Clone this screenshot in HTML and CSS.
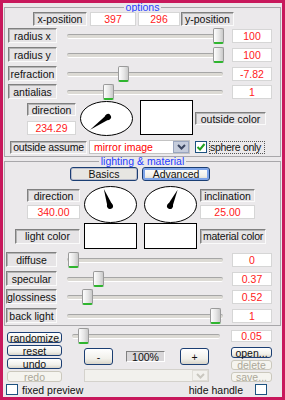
FILE: index.html
```html
<!DOCTYPE html>
<html lang="en">
<head>
    <meta charset="UTF-8">
    <meta name="viewport" content="width=device-width, initial-scale=1.0">
    <title>Sphere Options</title>
    <link rel="stylesheet" href="styles.css">
</head>
<body>
<div class="frame">
    <fieldset class="group options">
        <legend>options</legend>

        <div class="pos-row">
            <span class="tag xpos">x-position</span>
            <span class="num xval">397</span>
            <span class="num yval">296</span>
            <span class="tag ypos">y-position</span>
        </div>

        <div class="slider-row first">
            <span class="tag">radius x</span>
            <div class="track"><span class="thumb" style="left: 146px"></span></div>
            <span class="num">100</span>
        </div>
        <div class="slider-row">
            <span class="tag">radius y</span>
            <div class="track"><span class="thumb" style="left: 146px"></span></div>
            <span class="num">100</span>
        </div>
        <div class="slider-row">
            <span class="tag">refraction</span>
            <div class="track"><span class="thumb" style="left: 51px"></span></div>
            <span class="num">-7.82</span>
        </div>
        <div class="slider-row tight">
            <span class="tag">antialias</span>
            <div class="track"><span class="thumb" style="left: 36px"></span></div>
            <span class="num">1</span>
        </div>

        <div class="dir-row">
            <div class="dir-col">
                <span class="tag">direction</span>
                <span class="num">234.29</span>
            </div>
            <svg class="dial" width="53" height="35" viewBox="0 0 53 35">
                <ellipse cx="26.5" cy="17.5" rx="26" ry="17" fill="#fff" stroke="#000"/>
                <g transform="translate(28 16) rotate(234.29)">
                    <polygon points="0,-22 -2.6,0 2.6,0"/>
                    <circle r="3"/>
                </g>
            </svg>
            <span class="swatch"></span>
            <span class="tag out-color">outside color</span>
        </div>

        <div class="assume-row">
            <span class="tag assume">outside assume</span>
            <div class="combo">
                <span class="combo-text">mirror image</span>
                <span class="combo-btn">
                    <svg width="9" height="6" viewBox="0 0 9 6"><path d="M1 1 L4.5 4.5 L8 1" fill="none" stroke="#3b4660" stroke-width="2"/></svg>
                </span>
            </div>
            <span class="check">
                <svg width="10" height="10" viewBox="0 0 10 10"><path d="M1.5 5 L4 7.5 L8.5 2" fill="none" stroke="#21a121" stroke-width="2"/></svg>
            </span>
            <span class="check-label">sphere only</span>
        </div>
    </fieldset>

    <fieldset class="group lighting">
        <legend>lighting &amp; material</legend>

        <div class="tab-row">
            <span class="btn tab pressed">Basics</span>
            <span class="btn tab hot">Advanced</span>
        </div>

        <div class="light-dir">
            <div class="dir-col wide">
                <span class="tag">direction</span>
                <span class="num">340.00</span>
            </div>
            <svg class="dial" width="53" height="37" viewBox="0 0 53 37">
                <ellipse cx="26.5" cy="18.5" rx="26" ry="18" fill="#fff" stroke="#000"/>
                <g transform="translate(26 20) rotate(340)">
                    <polygon points="0,-18 -2.6,0 2.6,0"/>
                    <circle r="3"/>
                </g>
            </svg>
            <svg class="dial second" width="53" height="37" viewBox="0 0 53 37">
                <ellipse cx="26.5" cy="18.5" rx="26" ry="18" fill="#fff" stroke="#000"/>
                <g transform="translate(26 20) rotate(25)">
                    <polygon points="0,-18 -2.6,0 2.6,0"/>
                    <circle r="3"/>
                </g>
            </svg>
            <div class="dir-col right">
                <span class="tag">inclination</span>
                <span class="num">25.00</span>
            </div>
        </div>

        <div class="color-row">
            <span class="tag light-tag">light color</span>
            <span class="swatch small"></span>
            <span class="swatch small second"></span>
            <span class="tag mat-tag">material color</span>
        </div>

        <div class="slider-row lit gap3">
            <span class="tag">diffuse</span>
            <div class="track"><span class="thumb" style="left: 1px"></span></div>
            <span class="num">0</span>
        </div>
        <div class="slider-row lit">
            <span class="tag">specular</span>
            <div class="track"><span class="thumb" style="left: 26px"></span></div>
            <span class="num">0.37</span>
        </div>
        <div class="slider-row lit gap3">
            <span class="tag">glossiness</span>
            <div class="track"><span class="thumb" style="left: 15px"></span></div>
            <span class="num">0.52</span>
        </div>
        <div class="slider-row lit">
            <span class="tag">back light</span>
            <div class="track"><span class="thumb" style="left: 143px"></span></div>
            <span class="num">1</span>
        </div>
    </fieldset>

    <div class="bottom">
        <div class="left-col">
            <span class="btn">randomize</span>
            <span class="btn">reset</span>
            <span class="btn">undo</span>
            <span class="btn off">redo</span>
        </div>
        <div class="mid-col">
            <div class="track rnd"><span class="thumb" style="left: 6px"></span></div>
            <div class="zoom-row">
                <span class="btn zoom">-</span>
                <span class="pct">100%</span>
                <span class="btn zoom plus">+</span>
            </div>
            <div class="combo off">
                <span class="combo-text"></span>
                <span class="combo-btn">
                    <svg width="9" height="6" viewBox="0 0 9 6"><path d="M1 1 L4.5 4.5 L8 1" fill="none" stroke="#c9c7bf" stroke-width="2"/></svg>
                </span>
            </div>
        </div>
        <div class="right-col">
            <span class="num rnd-val">0.05</span>
            <span class="btn open">open...</span>
            <span class="btn off">delete</span>
            <span class="btn off">save...</span>
        </div>
    </div>

    <div class="footer">
        <span class="check"></span>
        <span class="foot-text">fixed preview</span>
        <span class="foot-text push">hide handle</span>
        <span class="check last"></span>
    </div>
</div>
</body>
</html>
```

FILE: styles.css
```css
* {
    box-sizing: border-box;
}
body {
    margin: 0;
    font-family: "Liberation Sans", Arial, sans-serif;
    font-size: 10.5px;
    color: #111;
}
.frame {
    width: 285px;
    height: 400px;
    border: 3px solid #c8185c;
    background: #ebe9eb;
    padding: 0 1px;
    overflow: hidden;
}

/* group boxes */
.group {
    margin: 0;
    padding: 0 0 2px;
    border: 1px solid #a8a7aa;
    min-width: 0;
}
.group legend {
    margin: 0 auto;
    padding: 0 2px;
    line-height: 9px;
    color: #1f3cff;
}

/* label boxes and value boxes */
.tag {
    display: flex;
    align-items: center;
    justify-content: center;
    height: 15px;
    border: 1px solid;
    border-color: #808080 #fafafa #fafafa #808080;
    box-shadow: inset 1px 1px 0 #b4b4b4;
    background: #e6e4e6;
    white-space: nowrap;
}
.num {
    display: flex;
    align-items: center;
    justify-content: center;
    height: 14px;
    background: #fff;
    border: 1px solid #d6d6d6;
    color: #ff1a1a;
}

/* options */
.pos-row {
    display: flex;
    height: 14px;
    margin-left: 28px;
}
.pos-row .tag {
    height: 14px;
}
.xpos {
    width: 54px;
}
.xval {
    width: 46px;
    margin-left: 3px;
}
.yval {
    width: 42px;
    margin-left: 2px;
}
.ypos {
    width: 53px;
    margin-left: 1px;
}

.slider-row {
    display: flex;
    align-items: center;
    height: 15px;
    margin-top: 4px;
    margin-left: 3px;
}
.slider-row.first {
    margin-top: 2px;
}
.slider-row.tight,
.slider-row.gap3 {
    margin-top: 3px;
}
.slider-row .tag {
    width: 49px;
}
.slider-row .track {
    margin-left: 10px;
}
.slider-row .num {
    width: 40px;
    margin-left: 9px;
}
.slider-row.lit {
    margin-left: 1px;
}
.slider-row.lit .tag {
    width: 51px;
}

.track {
    position: relative;
    width: 156px;
    height: 15px;
}
.track::before {
    content: "";
    position: absolute;
    left: 0;
    right: 0;
    top: 6px;
    height: 3px;
    border-radius: 2px;
    background: #dcdad4;
    border-top: 1px solid #a6a6a6;
    border-bottom: 1px solid #fff;
}
.thumb {
    position: absolute;
    top: 0;
    width: 11px;
    height: 16px;
    border: 1px solid #9a9a9a;
    border-bottom: 2px solid #2fb52f;
    border-radius: 2px;
    background: linear-gradient(to right, #fdfdfd, #e6e6e6 55%, #c9c9c9);
}

.dir-row {
    display: flex;
    align-items: flex-start;
    height: 37px;
    margin-top: 1px;
    margin-left: 22px;
}
.dir-col {
    display: flex;
    flex-direction: column;
    width: 49px;
}
.dir-col .tag {
    height: 13px;
    margin-top: 3px;
}
.dir-col .num {
    margin-top: 5px;
}
.dial {
    display: block;
    margin-left: 4px;
    margin-top: 1px;
}
.swatch {
    width: 53px;
    height: 35px;
    margin-left: 7px;
    background: #fff;
    border: 1px solid #000;
}
.out-color {
    width: 71px;
    height: 13px;
    margin-left: 2px;
    margin-top: 12px;
}

.assume-row {
    display: flex;
    align-items: center;
    height: 14px;
    margin-top: 3px;
    margin-left: 5px;
}
.assume {
    width: 77px;
    height: 13px;
    letter-spacing: -0.2px;
}
.combo {
    display: flex;
    width: 101px;
    height: 14px;
    margin-left: 2px;
    border: 1px solid #c3c3c3;
    background: #fff;
}
.combo-text {
    flex: 1;
    padding-left: 4px;
    line-height: 12px;
    color: #f00;
}
.combo-btn {
    display: flex;
    align-items: center;
    justify-content: center;
    width: 16px;
    background: #c6cddc;
    border: 1px solid #9aa6bf;
}
.check {
    display: flex;
    align-items: center;
    justify-content: center;
    width: 12px;
    height: 12px;
    margin-left: 5px;
    border: 1px solid #1c5180;
    background: #fff;
}
.check-label {
    width: 56px;
    height: 13px;
    margin-left: 2px;
    border: 1px dotted #555;
    line-height: 11px;
    letter-spacing: -0.3px;
    white-space: nowrap;
}

/* lighting & material */
.tab-row {
    display: flex;
    margin-top: 1px;
    margin-left: 65px;
}
.btn {
    display: flex;
    align-items: center;
    justify-content: center;
    border: 1px solid #1b3e73;
    border-radius: 3px;
    background: linear-gradient(#ffffff, #f1f0ea 65%, #d9d5c9);
    white-space: nowrap;
}
.btn.off {
    border-color: #cbc8bd;
    color: #aca899;
    background: #f5f4ef;
}
.tab {
    width: 68px;
    height: 14px;
}
.tab.pressed {
    background: #e7e6e2;
    box-shadow: inset 0 0 0 1px #b8bccb;
}
.tab.hot {
    margin-left: 4px;
    box-shadow: inset 0 0 0 2px #7ea4e9;
}

.light-dir {
    display: flex;
    align-items: flex-start;
    height: 37px;
    margin-top: 5px;
    margin-left: 22px;
}
.dir-col.wide {
    width: 53px;
}
.dir-col.wide .num {
    margin-top: 3px;
}
.light-dir .dial {
    margin-top: 0;
}
.light-dir .dial.second {
    margin-left: 7px;
}
.dir-col.right {
    width: 55px;
    margin-left: 3px;
}
.dir-col.right .num {
    margin-top: 3px;
}

.color-row {
    display: flex;
    align-items: center;
    height: 26px;
    margin-left: 10px;
}
.light-tag {
    width: 65px;
}
.swatch.small {
    height: 26px;
    margin-left: 4px;
}
.swatch.small.second {
    margin-left: 7px;
}
.mat-tag {
    width: 66px;
    margin-left: 3px;
    letter-spacing: -0.2px;
}

/* bottom controls */
.bottom {
    display: flex;
    align-items: flex-start;
    height: 57px;
    padding-left: 3px;
}
.left-col {
    display: flex;
    flex-direction: column;
    gap: 2px;
    width: 55px;
    padding-top: 6px;
}
.left-col .btn {
    height: 11px;
}
.mid-col {
    display: flex;
    flex-direction: column;
    width: 151px;
    margin-left: 10px;
}
.track.rnd {
    width: 148px;
    margin-top: 2px;
}
.zoom-row {
    display: flex;
    align-items: center;
    height: 17px;
    margin-top: 5px;
    margin-left: 12px;
}
.zoom {
    width: 29px;
    height: 17px;
}
.zoom.plus {
    margin-left: 15px;
}
.pct {
    display: flex;
    align-items: center;
    justify-content: center;
    width: 39px;
    height: 11px;
    margin-left: 13px;
    border: 1px solid;
    border-color: #808080 #fff #fff #808080;
    background: #d9d7d9;
}
.combo.off {
    width: 125px;
    height: 13px;
    margin-top: 4px;
    margin-left: 12px;
    border-color: #d4d2cc;
    background: #f2f1ed;
}
.combo.off .combo-btn {
    background: #f2f1ed;
    border-color: #e0ded8;
}
.right-col {
    display: flex;
    flex-direction: column;
    width: 41px;
    margin-left: 8px;
}
.rnd-val {
    height: 12px;
    margin-top: 4px;
}
.right-col .btn {
    height: 10px;
    margin-top: 2px;
}
.right-col .btn.open {
    height: 11px;
    margin-top: 5px;
}

.footer {
    display: flex;
    align-items: center;
    height: 11px;
    margin-top: 1px;
    padding-left: 2px;
}
.footer .check {
    height: 11px;
    margin-left: 0;
}
.foot-text {
    margin-left: 4px;
}
.foot-text.push {
    margin-left: auto;
}
.footer .check.last {
    margin-left: 12px;
    margin-right: 14px;
}
```
